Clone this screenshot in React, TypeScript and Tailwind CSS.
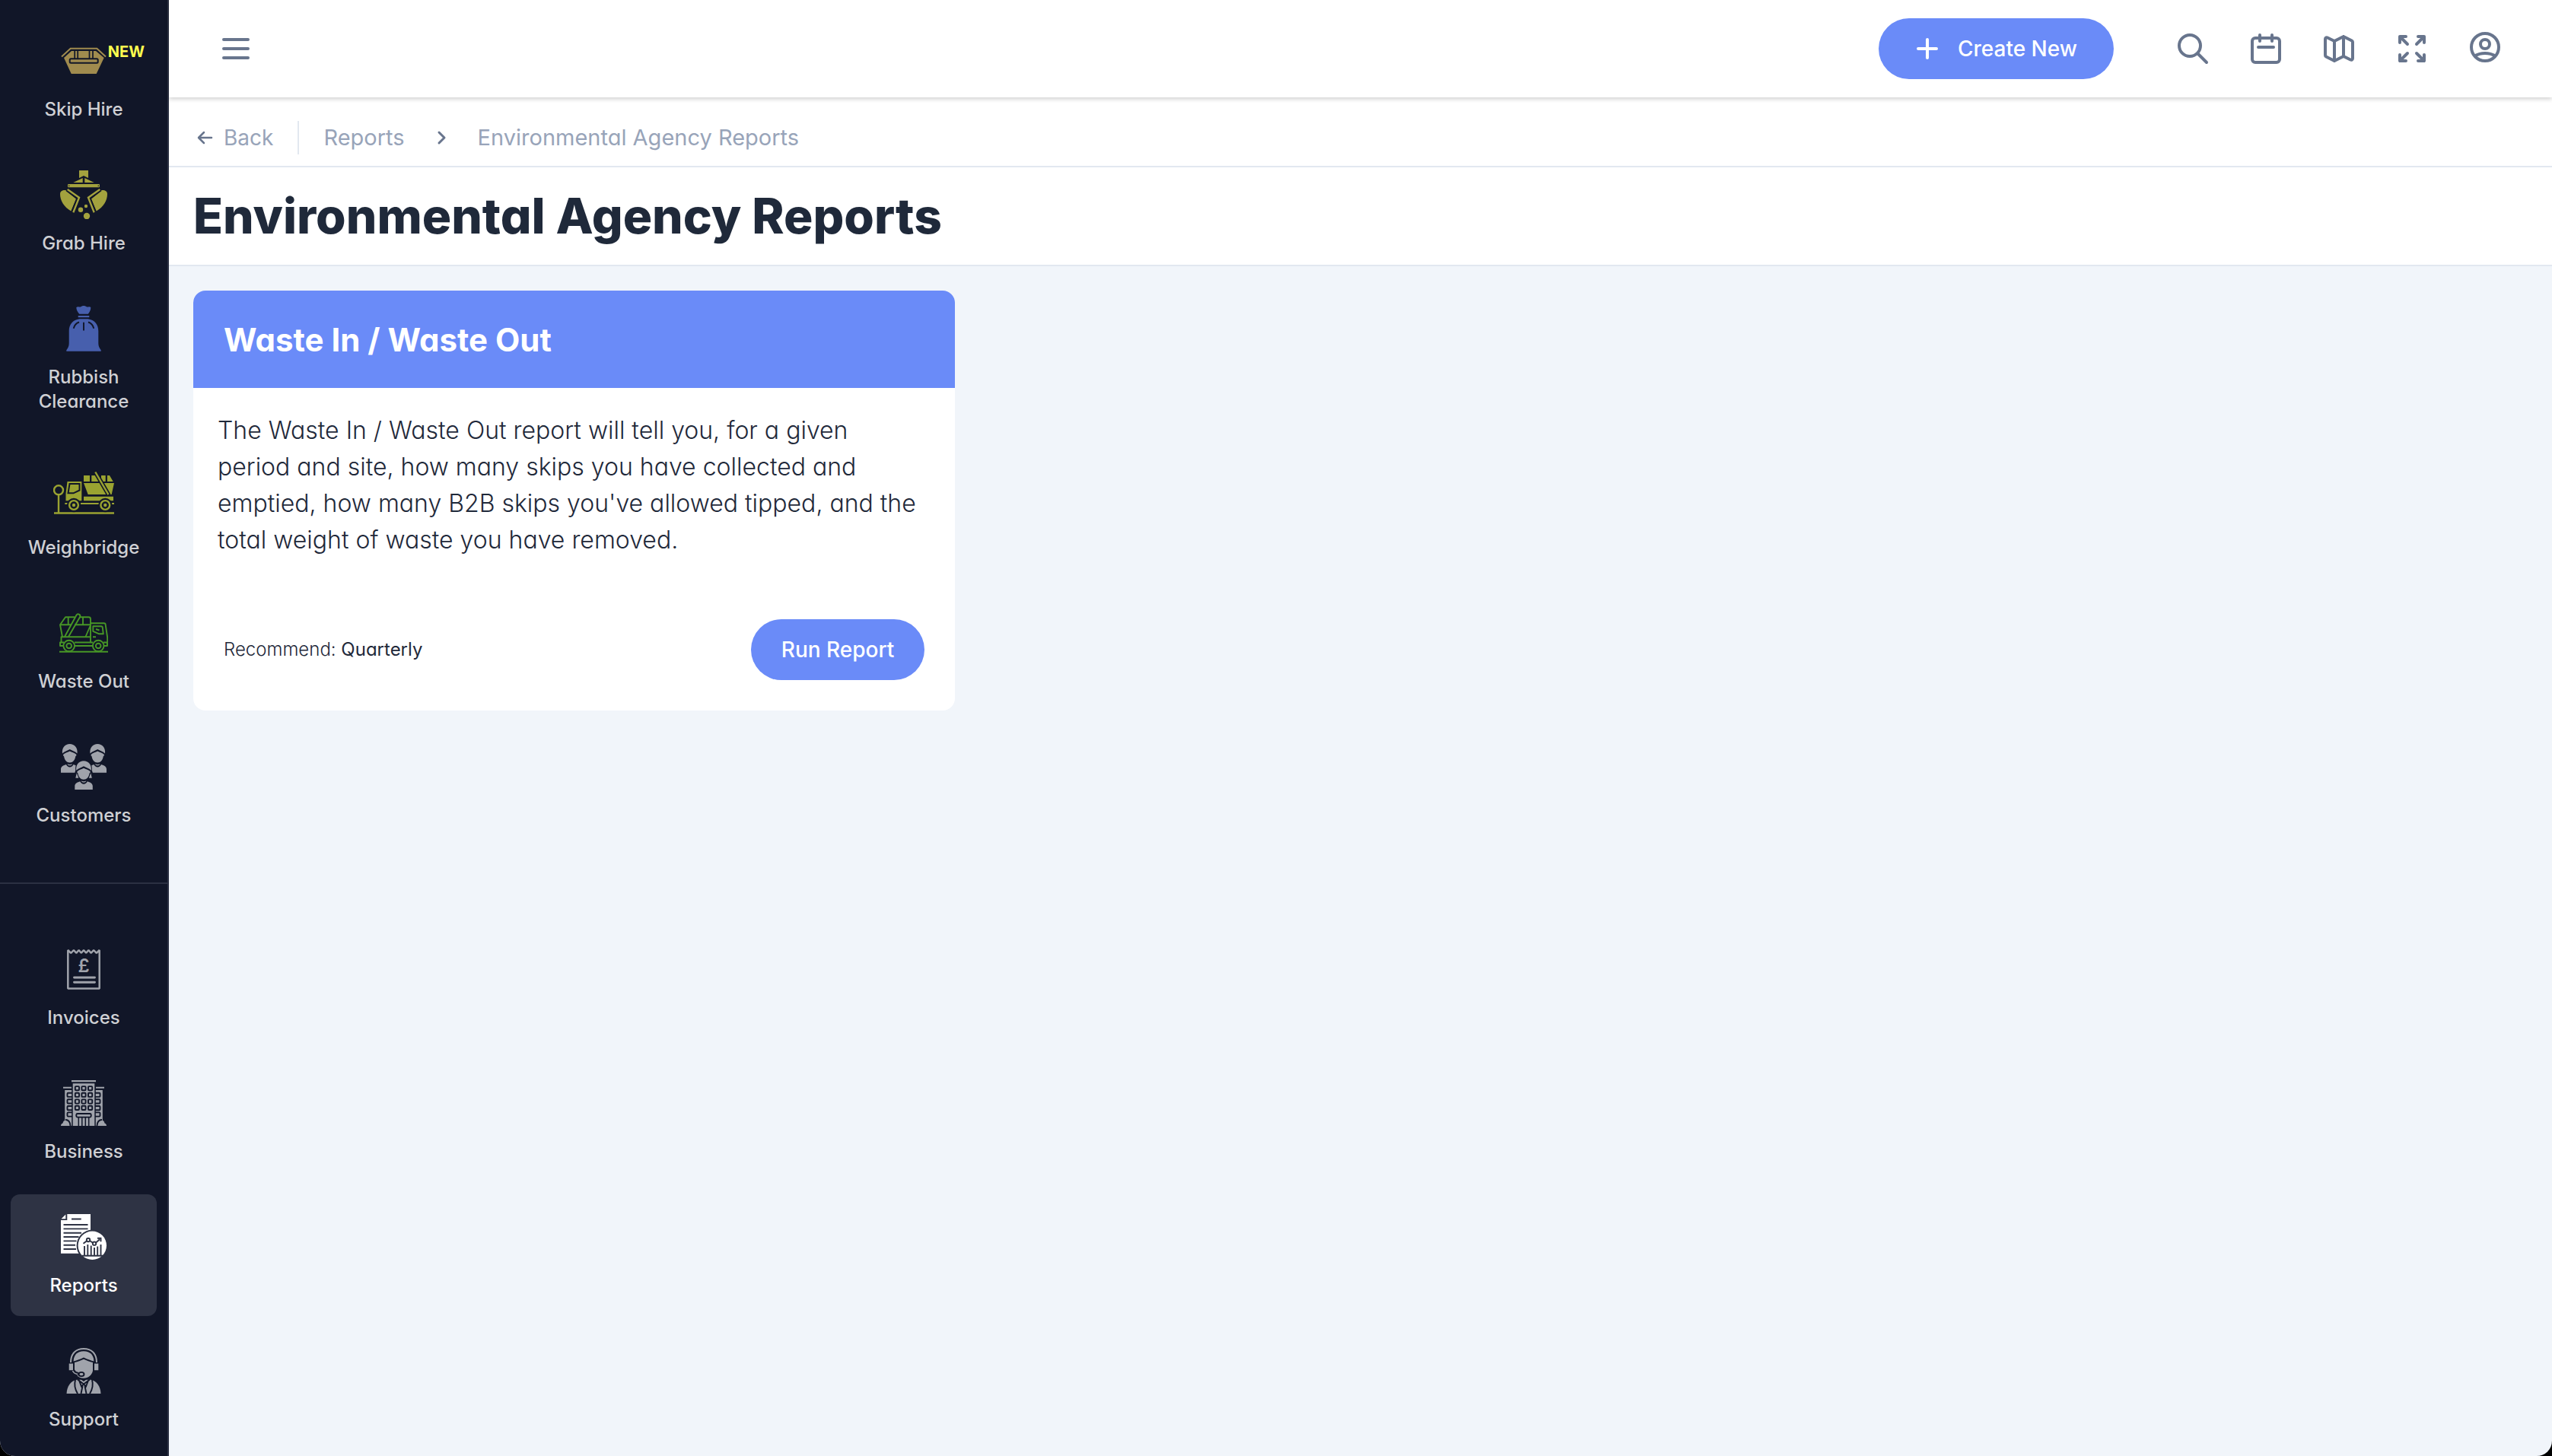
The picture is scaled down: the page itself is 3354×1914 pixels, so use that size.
import React from "react";

const SkipIcon = () => (
  <svg viewBox="0 0 64 64" className="size-16 text-[#a08b4e]" fill="currentColor">
    <path d="M3 26.5 14.7 15.7h34.6L61 26.5" fill="none" stroke="currentColor" strokeWidth="2" />
    <path d="M6 28 16 19h32l10.7 9-10 21h-33z" />
    <path
      d="M20.2 18v11M24.2 18v11M39.5 18v11M44 18v11"
      stroke="#111628"
      strokeWidth="1.7"
    />
    <rect x="13.7" y="29.3" width="37" height="5.4" rx="1.5" stroke="#111628" strokeWidth="2" />
  </svg>
);

const Claw = () => (
  <g>
    <path d="M1 31c0-4 3.5-5.5 7.5-5L22 37.5 15.3 53.5C6 48 1 40 1 31z" />
    <path d="M10.7 25 26 35.7 18.3 55.3" fill="none" stroke="currentColor" strokeWidth="2.4" />
    <path d="M8.8 26.6 22.9 36.9 16.5 53.5" fill="none" stroke="#111628" strokeWidth="1.3" />
  </g>
);

const GrabIcon = () => (
  <svg viewBox="0 0 64 64" className="size-16 text-[#a3a23e]" fill="currentColor">
    <path d="M26 0h12v10l-6-3-6 3zM18.3 16l12.4-6v6zM33.3 10l12.4 6H33.3z" />
    <rect x="11" y="18" width="42" height="4.3" rx="1" />
    <circle cx="12.7" cy="20.2" r=".8" fill="#111628" />
    <circle cx="51.3" cy="20.2" r=".8" fill="#111628" />
    <Claw />
    <g transform="matrix(-1 0 0 1 64 0)">
      <Claw />
    </g>
    <circle cx="28" cy="51.7" r="3.2" />
    <circle cx="35" cy="47" r="2.2" />
    <circle cx="36" cy="60" r="4.2" />
  </svg>
);

const BagIcon = () => (
  <svg viewBox="0 0 64 64" className="size-16 text-[#475fad]" fill="currentColor">
    <path d="M22.3 4c1.7-1.5 4-.5 5.7-.5 2-2 6-2 8 0 2 0 4-1 5.3.5 0 4-1.5 6-3.5 8.7H26.2C24 10 22.5 8 22.3 4z" />
    <path d="M24.7 15h14.6v2.2H24.7z" />
    <path d="M26.5 19.3h11c9 1.5 13.8 7 13.8 16v16c0 4 1.5 6 3.4 9v1.4H9.3v-1.4c2-3 3.4-5 3.4-9v-16c0-9 4.8-14.5 13.8-16z" />
    <path
      d="M18.7 31.7c1-4 3.5-7 7.3-8.2M32 23.7v10.8M45.3 31.7c-1-4-3.5-7-7.3-8.2"
      fill="none"
      stroke="#111628"
      strokeWidth="1.9"
    />
  </svg>
);

const WeighbridgeIcon = () => (
  <svg viewBox="-8 -16 80 80" className="size-20 text-[#9aa331]" fill="currentColor">
    <g fill="none" stroke="currentColor" strokeWidth="2.4">
      <circle cx="-1" cy="20.3" r="6" />
      <path d="M-1 26.3v24M-7 50.5h79" />
      <path d="M28 38h24M7.3 38H11M69 38h3" strokeWidth="2" />
    </g>
    <path d="M10.5 9h18.8v25.3H8.5V25z" />
    <path d="M13.5 12h13v8.5l-8 3.8h-7z" stroke="#111628" strokeWidth="2" />
    <path d="M32 1h8v8h-8zM42.3 1H60.7v8H42.3zM63 1h3l4.7 8H63zM32 11h40l-3.3 15h-31zM32 28.7h39v5.6H32z" />
    <path d="M55 7.5 66.5 26.5M54 1v8" stroke="#111628" strokeWidth="2" />
    <path d="M47.3-3.5 64.5 26.2" stroke="#111628" strokeWidth="5.5" />
    <path d="M47.3-3.5 64.5 26.2" stroke="currentColor" strokeWidth="2.4" />
    <circle cx="19" cy="40" r="9.2" fill="#111628" />
    <circle cx="60.3" cy="40" r="9.2" fill="#111628" />
    <circle cx="19" cy="40" r="5.9" fill="none" stroke="currentColor" strokeWidth="2.4" />
    <circle cx="60.3" cy="40" r="5.9" fill="none" stroke="currentColor" strokeWidth="2.4" />
    <circle cx="19" cy="40" r="2.2" />
    <circle cx="60.3" cy="40" r="2.2" />
  </svg>
);

const WasteOutIcon = () => (
  <svg
    viewBox="0 0 64 64"
    className="size-16 text-[#479626]"
    fill="none"
    stroke="currentColor"
    strokeWidth="1.9"
    strokeLinejoin="round"
  >
    <path d="M0 56.7h64" />
    <circle cx="12.7" cy="49" r="7.3" />
    <circle cx="12.7" cy="49" r="3.3" />
    <circle cx="51.2" cy="49" r="7.3" />
    <circle cx="51.2" cy="49" r="3.3" />
    <path d="M20 49h24M20 44.5h24M5.5 49H1v-4.5h5M58.5 49H63v-4.5h-5" />
    <path d="M2.5 44V37.2H41V44M20 11.3H8L1 21.3l3 15.9M27 11.3h11.5a2.5 2.5 0 0 1 2.5 2.5v30.7" />
    <path d="M1 21.3h14.5M20 21.3h21M11.7 11.3v10M31 11.3v10M34.5 37l6-14" />
    <path d="M7 37 22.5 8.5a2.6 2.6 0 0 1 4.6 2.4L12 37" />
    <path d="M41 19.3h17.7a2 2 0 0 1 2 2L63.2 38v6.5" />
    <path d="M44.3 23.3h10.5a2 2 0 0 1 2 2l1 8h-5.5l-8-3.5zM44 37.2h4M48 27l4.5 1.5" />
  </svg>
);

const Person = () => (
  <g>
    <path d="M4 14.5C3 7 7.5 2 13.7 2S24.5 7 23.5 14.5C21 11.5 17 11 13.7 9 10.5 11 6.5 11.5 4 14.5z" />
    <path d="M5.5 15.5C8 13.5 11 13 13.7 11.5c2.8 1.5 5.8 2 8.3 4 .8 1 .3 2.5-.7 2.5-.6 5-3.8 8.5-7.6 8.5S6.700 23 6 18c-1 0-1.3-1.5-.5-2.5z" />
    <path d="M2 39.7V35c0-3 3-5 7-6 2 4.5 7.5 4.5 9.5 0 4 1 7 3 7 6v4.7z" />
    <path d="M10.5 28.3c2 .8 4.5.8 6.5 0-.8 2.7-5.7 2.7-6.5 0z" />
  </g>
);

const CustomersIcon = () => (
  <svg viewBox="0 0 64 64" className="size-16 text-[#a0a3ab]" fill="currentColor">
    <Person />
    <g transform="translate(36.5 0)">
      <Person />
    </g>
    <g transform="translate(18.3 22.3)">
      <path d="M3 14C2 6 6.5 0 13.7 0s11.8 6 10.7 14l2.6 8-3 6H3.5L1 22zM7 27h14v6H7z" fill="#111628" />
      <path d="M4.5 18 3 24.5h4zM23 18l1.5 6.5h-4z" />
      <Person />
    </g>
  </svg>
);

const InvoiceIcon = () => (
  <svg viewBox="0 0 64 64" className="size-16 text-[#a0a3ab]" fill="none" stroke="currentColor">
    <path
      d="M11.3 7v50.4h41.4V7l-3.9 3.8-3.7-3.8-3.3 3.8L38.4 7 35.2 10.8 32 7l-3.2 3.8L25.6 7l-3.4 3.8L18.9 7l-3.7 3.8z"
      strokeWidth="2.5"
      strokeLinejoin="bevel"
    />
    <path d="M19.5 43h27M19.5 49.2h27" strokeWidth="2.9" strokeLinecap="round" />
    <text
      x="32"
      y="35.5"
      textAnchor="middle"
      fill="currentColor"
      stroke="none"
      className="font-[Inter] text-2xl font-semibold"
    >
      £
    </text>
  </svg>
);

const BusinessIcon = () => (
  <svg viewBox="0 0 64 64" className="size-16 text-[#a0a3ab]" fill="currentColor">
    <path d="M16 2h32v2.2H16zM5 10.7h11v2H5zM48 10.7h11v2H48zM17.7 6.3h28.6V62H17.7zM7.2 15h9v47h-9zM47.8 15h9v47h-9z" />
    <g fill="none" stroke="#111628" strokeWidth="1.9">
      {[12.7, 21.3, 30, 38.4].map((y) => (
        <React.Fragment key={y}>
          <rect x="20.8" y={y - 2.6} width="5.2" height="5.2" rx="1" />
          <rect x="29.4" y={y - 2.6} width="5.2" height="5.2" rx="1" />
          <rect x="38" y={y - 2.6} width="5.2" height="5.2" rx="1" />
          <path d={`M17 ${y + 6}h-5.5q-1 0-1 1v3.2q0 1 1 1H17M47 ${y + 6}h5.5q1 0 1 1v3.2q0 1-1 1H47`} />
        </React.Fragment>
      ))}
      <rect x="22.3" y="46" width="19.4" height="4.6" rx="1.5" />
      <path d="M25.3 51v11M38.7 51v11M29.8 51v11M34.3 51v11" strokeWidth="1.5" />
      <path d="M8 54q6 0 6.5 8M56 54q-6 0-6.5 8" />
    </g>
    <path d="M2 62c0-2 1-3 2.5-3.5C5 56 6 55 7.5 55c2.5.5 5.5 3 5.7 7zM62 62c0-2-1-3-2.5-3.5C59 56 58 55 56.5 55c-2.5.5-5.5 3-5.7 7z" />
  </svg>
);

const ReportsIcon = () => (
  <svg viewBox="0 0 64 64" className="size-16 text-white" fill="currentColor">
    <path d="M10.3 2H41v51.7H2V10h8.3zM8.3 2.5V8.3H2.5z" />
    <path
      d="M16 8.5h12.7M5.5 16h32M5.5 21.4h32M5.5 26.7h23.5M5.5 32h20M5.5 37.4h17M5.5 42.7h15.5M5.5 48h16.5"
      stroke="#2e3344"
      strokeWidth="1.9"
    />
    <circle cx="43.3" cy="43.3" r="20.7" fill="#2e3344" />
    <circle cx="43.3" cy="43.3" r="18.7" />
    <g fill="none" stroke="#2e3344" strokeWidth="1.9">
      <path d="M33 44v12M37.3 42v14M41.7 43.5v12.5M46 46v10M50.2 44.5v11.5M54.5 42v14M30 56.7h27" />
      <path d="M31.5 40.7 36 37.2M40 37l4 2.7M48 39.5l5-4.2M50 33.7h4.5v4.5" />
      <circle cx="38" cy="36" r="2.2" />
      <circle cx="46" cy="40.7" r="2.2" />
    </g>
  </svg>
);

const SupportIcon = () => (
  <svg viewBox="0 0 64 64" className="size-16 text-[#a0a3ab]" fill="currentColor">
    <path d="M15 21C15 9 22 3 32 3s17 6 17 18" fill="none" stroke="currentColor" strokeWidth="2" />
    <path d="M18.5 19.5C19 10.5 24 6.2 32 6.2s13 4.3 13.5 13.3C42 18.5 37 17 32 14.5c-5 2.5-10 4-13.5 5z" />
    <path d="M20 21c4-1 8-2.2 12-4.2 4 2 8 3.2 12 4.2v11c-1.5 6-6 9.7-12 9.7-4 0-7-1.2-9-4L20 32z" />
    <path d="M12.7 22.5H18v8.7h-5.3zM46 22.5h5.3v8.7H46z" />
    <path d="M18.5 31.5c1 2.5 3.5 4 6.5 4.5" fill="none" stroke="#111628" strokeWidth="4" />
    <path d="M17.5 32c1 2.5 3.5 4 6.5 4.5" fill="none" stroke="currentColor" strokeWidth="1.5" />
    <ellipse cx="29" cy="36.5" rx="3.5" ry="2.6" stroke="#111628" strokeWidth="1.9" />
    <path d="M9.5 62C10 52 15 45 23 43.7h18C49 45 54 52 54.5 62z" />
    <path
      d="M21 44c-2 7 0 13 3 18M43 44c2 7 0 13-3 18M24 43.5l8 6 8-6M25.5 43.5l3.5 9 3-3 3 3 3.5-9M30.5 52 28.5 62M33.5 52l2 10"
      fill="none"
      stroke="#111628"
      strokeWidth="1.9"
    />
    <path d="M26.5 42h11l-5.5 4z" fill="#111628" />
  </svg>
);

const mainLinks = [
  { label: "Skip Hire", icon: <SkipIcon />, badge: "NEW" },
  { label: "Grab Hire", icon: <GrabIcon /> },
  { label: "Rubbish Clearance", icon: <BagIcon /> },
  { label: "Weighbridge", icon: <WeighbridgeIcon /> },
  { label: "Waste Out", icon: <WasteOutIcon /> },
  { label: "Customers", icon: <CustomersIcon /> },
];

const otherLinks = [
  { label: "Invoices", icon: <InvoiceIcon /> },
  { label: "Business", icon: <BusinessIcon /> },
  { label: "Reports", icon: <ReportsIcon />, active: true },
  { label: "Support", icon: <SupportIcon /> },
];

const toolbar = [
  {
    label: "Search",
    d: "M21 21l-6-6m2-5a7 7 0 11-14 0 7 7 0 0114 0z",
  },
  {
    label: "Calendar",
    d: "M8 7V3m8 4V3m-9 8h10M5 21h14a2 2 0 002-2V7a2 2 0 00-2-2H5a2 2 0 00-2 2v12a2 2 0 002 2z",
  },
  {
    label: "Map",
    d: "M9 20l-5.447-2.724A1 1 0 013 16.382V5.618a1 1 0 011.447-.894L9 7m0 13l6-3m-6 3V7m6 10l4.553 2.276A1 1 0 0021 18.382V7.618a1 1 0 00-.553-.894L15 4m0 13V4m0 0L9 7",
  },
  {
    label: "Fullscreen",
    d: "M4 8V4m0 0h4M4 4l5 5m11-1V4m0 0h-4m4 0l-5 5M4 16v4m0 0h4m-4 0l5-5m11 5l-5-5m5 5v-4m0 4h-4",
  },
  {
    label: "Account",
    d: "M5.121 16.804A13.937 13.937 0 0112 15c2.5 0 4.847.655 6.879 1.804M15 9a3 3 0 11-6 0 3 3 0 016 0zm6 2a9 9 0 11-18 0 9 9 0 0118 0z",
  },
];

type OutlineIconProps = { d: string };

const OutlineIcon = ({ d }: OutlineIconProps) => (
  <svg
    viewBox="0 0 24 24"
    className="size-12"
    fill="none"
    stroke="currentColor"
    strokeWidth="2"
    strokeLinecap="round"
    strokeLinejoin="round"
  >
    <path d={d} />
  </svg>
);

type NavItemProps = {
  label: string;
  icon: React.ReactNode;
  badge?: string;
  active?: boolean;
};

const NavItem = ({ label, icon, badge, active }: NavItemProps) => (
  <a
    href="#"
    className={
      active
        ? "relative flex flex-col items-center gap-4 rounded-xl bg-[#2e3344] p-6 text-white"
        : "relative flex flex-col items-center gap-4 rounded-xl p-6 text-[#cfd0d4]"
    }
  >
    {icon}
    {badge && (
      <span className="absolute top-[30px] right-4 text-xl font-bold text-[#ffff4f]">
        {badge}
      </span>
    )}
    <span className="text-center text-2xl font-medium">{label}</span>
  </a>
);

const Sidebar = () => (
  <aside className="w-[222px] shrink-0 border-r-2 border-[#2b3042] bg-[#111628]">
    <nav>
      <div className="flex flex-col gap-4 border-b-2 border-[#2b3042] px-3.5 pt-6 pb-12">
        {mainLinks.map((link) => (
          <NavItem key={link.label} {...link} />
        ))}
      </div>
      <div className="flex flex-col gap-4 px-3.5 pt-14">
        {otherLinks.map((link) => (
          <NavItem key={link.label} {...link} />
        ))}
      </div>
    </nav>
  </aside>
);

const Header = () => (
  <header className="relative flex h-32 items-center justify-between bg-white px-12 text-[#68758d] shadow-[0_2px_6px_rgba(0,0,0,0.2)]">
    <button aria-label="Toggle menu" className="flex size-20 items-center justify-center">
      <OutlineIcon d="M4 6h16M4 12h16M4 18h16" />
    </button>
    <div className="flex items-center gap-4">
      <button className="mr-12 flex h-20 items-center gap-4 rounded-full bg-[#6a8bf8] pr-12 pl-10 text-[28px] font-medium text-white [font-feature-settings:normal]">
        <OutlineIcon d="M12 6v6m0 0v6m0-6h6m-6 0H6" />
        Create New
      </button>
      {toolbar.map((item) => (
        <button
          key={item.label}
          aria-label={item.label}
          className="flex size-20 items-center justify-center"
        >
          <OutlineIcon d={item.d} />
        </button>
      ))}
    </div>
  </header>
);

const Breadcrumb = () => (
  <div className="flex h-23 items-center border-b-2 border-[#e2e8f0] px-8 pt-4 text-[29px] text-[#98a4b9]">
    <button className="flex items-center gap-3 pr-8 text-[28px] [font-feature-settings:normal]">
      <svg
        viewBox="0 0 28 28"
        className="size-7 text-[#68758d]"
        fill="none"
        stroke="currentColor"
        strokeWidth="2.5"
        strokeLinecap="round"
        strokeLinejoin="round"
      >
        <path d="M24 14H7.5M14 7 7 14l7 7" />
      </svg>
      Back
    </button>
    <a href="#" className="border-l-2 border-[#e2e8f0] pl-8">
      Reports
    </a>
    <svg
      viewBox="0 0 32 32"
      className="mx-8 size-8 text-[#68758d]"
      fill="none"
      stroke="currentColor"
      strokeWidth="3"
      strokeLinecap="round"
      strokeLinejoin="round"
    >
      <path d="M13 9 20 16l-7 7" />
    </svg>
    <a href="#">Environmental Agency Reports</a>
  </div>
);

const ReportCard = () => (
  <div className="overflow-hidden rounded-2xl bg-white">
    <div className="flex h-32 items-center bg-[#6a8bf8] px-10">
      <h2 className="text-[42px] font-bold text-white">Waste In / Waste Out</h2>
    </div>
    <p className="py-8 pr-12 pb-10 pl-8 text-[32px] leading-12 font-light">
      The Waste In / Waste Out report will tell you, for a given period and site,
      how many skips you have collected and emptied, how many B2B skips you've
      allowed tipped, and the total weight of waste you have removed.
    </p>
    <div className="flex items-center justify-between p-10">
      <p className="text-2xl font-light">
        Recommend: <span className="font-normal">Quarterly</span>
      </p>
      <button className="h-20 rounded-full bg-[#6a8bf8] px-10 text-[28px] font-medium text-white [font-feature-settings:normal]">
        Run Report
      </button>
    </div>
  </div>
);

const App = () => {
  return (
    <div className="bg-black">
      <div className="flex min-h-screen overflow-hidden rounded-b-[20px] bg-[#f1f5fa] font-[Inter,sans-serif] text-[#1f293a] [font-feature-settings:'cv11']">
        <Sidebar />
        <main className="min-w-0 flex-1">
          <Header />
          <div className="bg-white">
            <Breadcrumb />
            <div className="border-b-2 border-[#e2e8f0] p-8">
              <h1 className="text-[64px] leading-16 font-extrabold">
                Environmental Agency Reports
              </h1>
            </div>
          </div>
          <div className="grid grid-cols-3 gap-8 p-8">
            <ReportCard />
          </div>
        </main>
      </div>
    </div>
  );
};

export default App;
